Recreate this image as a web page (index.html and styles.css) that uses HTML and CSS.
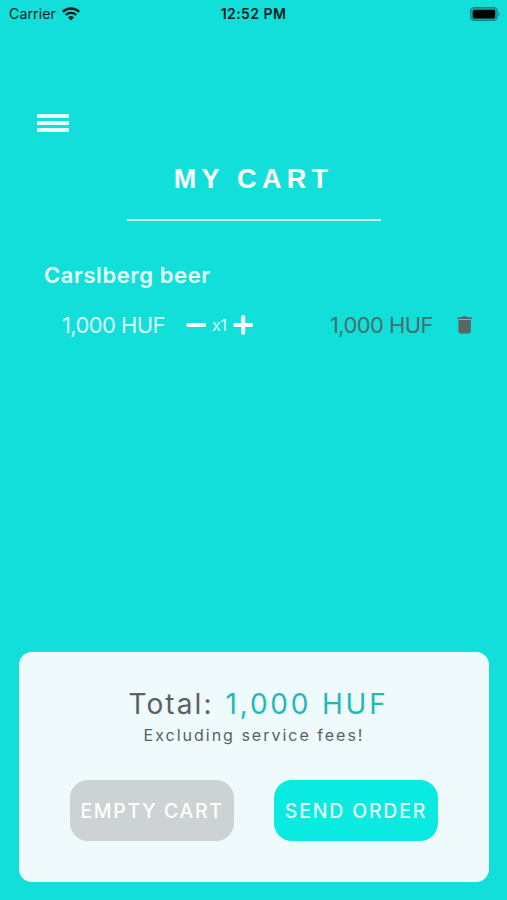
FILE: index.html
```html
<!DOCTYPE html>
<html lang="en">
<head>
    <meta charset="UTF-8">
    <meta name="viewport" content="width=device-width, initial-scale=1.0">
    <title>My Cart</title>
    <link rel="stylesheet" href="styles.css">
</head>
<body>

    <!-- Status bar -->
    <div class="status-bar">
        <div class="status-left">
            <span class="carrier">Carrier</span>
            <svg class="wifi" width="18" height="14" viewBox="0 0 18 14">
                <path d="M0.8 4.9 A11.8 11.8 0 0 1 17.2 4.9" fill="none" stroke="#03201f" stroke-width="2.5"/>
                <path d="M3.7 8 A7.6 7.6 0 0 1 14.3 8" fill="none" stroke="#03201f" stroke-width="2.3"/>
                <path d="M9 13.6 L6 10.5 A4.3 4.3 0 0 1 12 10.5 Z" fill="#03201f"/>
            </svg>
        </div>
        <span class="clock">12:52 PM</span>
        <div class="status-right">
            <svg width="31" height="14" viewBox="0 0 31 14">
                <rect x="0.6" y="0.6" width="26.6" height="12.8" rx="3.6" fill="#17aaa8" stroke="#0e8583" stroke-width="1.1"/>
                <rect x="2.7" y="2.7" width="22.5" height="8.8" rx="1.6" fill="#000"/>
                <path d="M28.6 4.9 A2.4 2.4 0 0 1 28.6 9.1 Z" fill="#0e8583"/>
            </svg>
        </div>
    </div>

    <!-- Header with menu and title -->
    <header>
        <button class="menu-button" aria-label="Menu">
            <span></span>
            <span></span>
            <span></span>
        </button>
        <h1>MY CART</h1>
    </header>

    <!-- Cart items -->
    <main class="cart">
        <h2>Carslberg beer</h2>
        <div class="item-row">
            <span class="price">1,000 HUF</span>
            <button class="icon-button" aria-label="Remove one">
                <svg width="20" height="20" viewBox="0 0 20 20">
                    <path d="M2.2 10 H18.2" stroke="#fff" stroke-width="4" stroke-linecap="round"/>
                </svg>
            </button>
            <span class="quantity">x1</span>
            <button class="icon-button" aria-label="Add one">
                <svg width="20" height="20" viewBox="0 0 20 20">
                    <path d="M2.2 10 H18.2 M10.2 2 V18" stroke="#fff" stroke-width="4" stroke-linecap="round"/>
                </svg>
            </button>
            <span class="price item-total">1,000 HUF</span>
            <button class="icon-button" aria-label="Delete">
                <svg width="16" height="18" viewBox="0 0 16 18">
                    <path d="M0.4 1.2 H4.6 L5.6 0.3 H9.4 L10.4 1.2 H14.8 V3 H0.4 Z" fill="#5b6667"/>
                    <path d="M1.4 4 H13.8 V15.4 A2.1 2.1 0 0 1 11.7 17.5 H3.5 A2.1 2.1 0 0 1 1.4 15.4 Z" fill="#5b6667"/>
                </svg>
            </button>
        </div>
    </main>

    <!-- Summary -->
    <section class="summary">
        <p class="total">Total: <span class="total-price">1,000 HUF</span></p>
        <p class="note">Excluding service fees!</p>
        <div class="button-group">
            <button class="empty-button">EMPTY CART</button>
            <button class="send-button">SEND ORDER</button>
        </div>
    </section>

</body>
</html>
```
FILE: styles.css
```css
* {
    box-sizing: border-box;
    margin: 0;
    padding: 0;
}

body {
    display: flex;
    flex-direction: column;
    height: 900px;
    font-family: Inter, sans-serif;
    background-color: #12dfda;
    color: #ffffff;
    overflow: hidden;
}

button {
    border: none;
    background: none;
    font-family: inherit;
    cursor: pointer;
}

.status-bar {
    display: grid;
    grid-template-columns: 1fr auto 1fr;
    align-items: center;
    height: 27px;
    padding: 0 6px 0 9px;
    color: #03201f;
    font-size: 14px;
}

.status-left {
    display: flex;
    align-items: center;
    gap: 6px;
}

.carrier {
    letter-spacing: 0.15px;
}

.clock {
    margin-right: 3px;
    font-weight: 600;
    letter-spacing: 0.45px;
}

.status-right {
    display: flex;
    justify-content: flex-end;
}

header {
    display: flex;
    flex-direction: column;
    align-items: center;
}

.menu-button {
    display: flex;
    flex-direction: column;
    align-self: flex-start;
    gap: 3px;
    margin: 87px 0 0 37px;
}

.menu-button span {
    width: 32px;
    height: 4px;
    background-color: #e2fffd;
}

h1 {
    width: 254px;
    height: 58px;
    margin-top: 31px;
    border-bottom: 2px solid #c9f9f7;
    font-family: "Liberation Sans", Arial, sans-serif;
    font-size: 27px;
    line-height: 32px;
    letter-spacing: 5.3px;
    text-align: center;
}

.cart {
    padding: 39px 34px 0 44px;
}

h2 {
    font-size: 22px;
    font-weight: 600;
    line-height: 30px;
    letter-spacing: 0.6px;
    color: #e6fffd;
}

.item-row {
    display: flex;
    align-items: center;
    height: 30px;
    margin-top: 20px;
    padding-left: 18px;
}

.price {
    width: 124px;
    font-size: 22px;
    font-weight: 400;
    letter-spacing: -0.6px;
    color: #dcfdfb;
}

.icon-button {
    display: flex;
}

.quantity {
    width: 27px;
    font-size: 16px;
    text-align: center;
    color: #dcfdfb;
}

.item-total {
    width: 127px;
    margin-left: auto;
    color: #43706f;
}

.summary {
    height: 230px;
    margin: auto 18px 18px 19px;
    padding-top: 33px;
    border-radius: 13px;
    background-color: #eefafb;
    text-align: center;
    color: #5c6062;
}

.total {
    padding-left: 9px;
    font-size: 28px;
    line-height: 38px;
    letter-spacing: 2.1px;
}

.total-price {
    margin-left: 2px;
    letter-spacing: 2.8px;
    color: #1fbab5;
}

.note {
    margin-top: 2px;
    font-size: 16px;
    line-height: 20px;
    letter-spacing: 2px;
}

.button-group {
    display: flex;
    justify-content: center;
    gap: 40px;
    margin-top: 35px;
}

.button-group button {
    width: 164px;
    height: 61px;
    border-radius: 18px;
    font-size: 19.5px;
    font-weight: 500;
    letter-spacing: 1.8px;
    line-height: 24px;
    white-space: nowrap;
    color: #ffffff;
}

.button-group .empty-button {
    background-color: #cdd2d3;
    letter-spacing: 1.6px;
}

.button-group .send-button {
    background-color: #0aeae1;
    color: #e2fffd;
}
```
